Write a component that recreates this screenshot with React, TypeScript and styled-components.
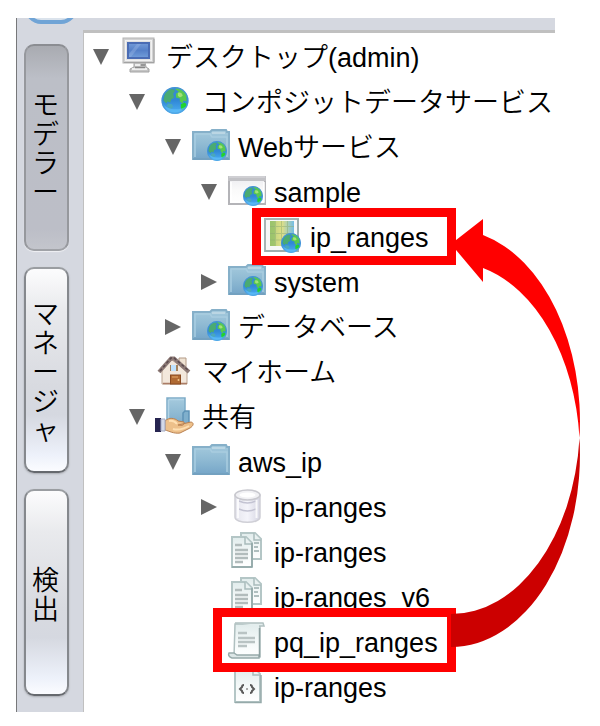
import React from "react";
import styled, { createGlobalStyle } from "styled-components";

const GlobalStyle = createGlobalStyle`
  * { box-sizing: border-box; }
  body {
    margin: 0;
    background: #fff;
    color: #000;
    font-family: "Liberation Sans", "Noto Sans CJK JP", sans-serif;
    font-size: 27px;
    font-weight: 350;
  }
`;

const Page = styled.main`
  position: relative;
  padding: 18px 45px 14px 16px;
`;

const Window = styled.div`
  display: grid;
  grid-template-columns: 66px 1fr;
  border-left: 1px solid #77787a;
  background: #d5d8e0;
`;

const Toolbar = styled.header`
  grid-column: 1 / -1;
  height: 12px;
  padding-left: 8px;
  overflow: hidden;
`;

const ToolButton = styled.button`
  display: block;
  width: 52px;
  height: 44px;
  margin-top: -38px;
  padding: 0;
  border: 4px solid #70a4d6;
  border-radius: 16px;
  background: #dbe3ec;
`;

const Rail = styled.nav`
  display: flex;
  flex-direction: column;
  gap: 16px;
  padding: 14px 14px 16px 7px;
`;

const RailTab = styled.button<{ $active?: boolean }>`
  flex: 1;
  display: flex;
  align-items: center;
  justify-content: center;
  padding: 6px 2px 0 0;
  border: 2px solid;
  border-color: ${(p) => (p.$active ? "#8b8d92 #96989d #a0a2a7" : "#9a9da1 #85888d #66696e")};
  border-radius: 10px;
  background: ${(p) =>
    p.$active
      ? "linear-gradient(#a9abb1, #bcbfc7 16%, #bcbec7 90%, #c3c5cc)"
      : "linear-gradient(#fcfcfd, #e9eaed 20%, #d8dae0 58%, #d5d8e0 72%, #edf1fa 92%, #fbfcff)"};
  box-shadow: ${(p) => (p.$active ? "0 1px 1px #f0f1f4" : "0 1px 2px #a9abb1")};
  color: #000;
  font: inherit;
  line-height: 29px;
`;

const RailLabel = styled.span`
  width: 27px;
  line-break: anywhere;
`;

const Tree = styled.ul`
  margin: 0;
  padding: 3px 0 1px;
  list-style: none;
  background: #fff;
  border-top: 3px solid #c0c0c0;
  border-left: 1px solid #c0c0c0;
`;

const Row = styled.li<{ $level: number }>`
  display: flex;
  align-items: center;
  height: 45px;
  padding-left: ${(p) => 9 + p.$level * 36}px;
  white-space: nowrap;
`;

const Toggle = styled.button`
  display: flex;
  width: 16px;
  padding: 0;
  border: 0;
  background: none;
`;

const ToggleSpace = styled.span`
  width: 16px;
`;

const IconCell = styled.svg`
  flex: none;
  width: 38px;
  height: 45px;
  margin: 0 8px 0 11px;
  overflow: visible;
`;

const Label = styled.span`
  line-height: 45px;
`;

const Frame = styled.div<{ $left: number; $top: number; $height: number }>`
  position: absolute;
  left: ${(p) => p.$left}px;
  top: ${(p) => p.$top}px;
  width: ${(p) => 456 - p.$left}px;
  height: ${(p) => p.$height}px;
  border: 9px solid #f00;
  pointer-events: none;
`;

const Arrow = styled.svg`
  position: absolute;
  left: 450px;
  top: 210px;
  pointer-events: none;
`;

const Gradients = styled.svg`
  position: absolute;
`;

function Globe({ x, y, r }: { x: number; y: number; r: number }) {
  return (
    <g transform={`translate(${x} ${y}) scale(${r / 14})`}>
      <circle r="14" fill="url(#sea)" />
      <path d="M-11 -5 C-10 -9 -6 -12 -3 -12 L0 -10 -2 -7 -1 -3 -4 -1 -5 2 -8 1 -9 3 -12 0z" fill="#4aab72" />
      <path d="M0 -12 C5 -14 11 -9 12 -5 L12 1 9 0 8 3 5 1 5 -2 1 -3 1 -7 4 -9z" fill="#58c94e" />
      <path d="M6 4 L10 2 12 4 C12 7 9 10 7 10 L6 7z" fill="#20d52c" />
      <path d="M-7 3 L-3 4 -2 7 -5 9 -9 6z" fill="#4aa8bc" />
      <path d="M3 -8 q4 -1 5 3 q-3 3 -5 0z" fill="#a4e078" />
      <path d="M-12 4 C-8 10 5 11 12 6 C9 12 4 14 0 14 C-6 14 -10 10 -12 4z" fill="#63c1fa" opacity=".6" />
      <circle r="13.2" fill="none" stroke="#4a9ada" strokeWidth="1.6" opacity=".6" />
    </g>
  );
}

function Folder() {
  return (
    <g>
      <path d="M1 6 H18 L20 4 H34 L35 6 H37 V33 H1z" fill="url(#folder)" stroke="#86b0c9" strokeWidth="2" />
      <path d="M3 8 H18 L20 11 H35 V31" fill="none" stroke="#a9cde0" strokeWidth="1.5" />
      <path d="M3 8 V31" stroke="#a9cee2" strokeWidth="1.5" />
      <path d="M20 6 H33 V8 H20z" fill="#bbd6e4" />
      <path d="M1 33 H37" stroke="#6c9dbd" strokeWidth="1.5" />
    </g>
  );
}

function Paper({ x, y, w, h }: { x: number; y: number; w: number; h: number }) {
  return (
    <g transform={`translate(${x} ${y})`}>
      <path d={`M1 1 H${w - 7} L${w - 1} 7 V${h - 1} H1z`} fill="url(#paper)" stroke="#b4c6c6" strokeWidth="2" />
      <path d={`M${w - 8} 1 V8 H${w - 1}`} fill="#e9f1f1" stroke="#a9bcbc" strokeWidth="1.5" />
    </g>
  );
}

function DocPair() {
  return (
    <g>
      <Paper x={12} y={1} w={22} h={28} />
      <path d="M26 12 h5 M26 16 h4 M26 20 h5" stroke="#b0bfbf" strokeWidth="2" />
      <Paper x={3} y={5} w={22} h={32} />
      <path d="M7 14 h7 M7 19 h13 M7 23 h13 M7 27 h13 M7 31 h8" stroke="#b2bcbc" strokeWidth="2.5" />
      <path d="M4 36 H24 M24 12 V36" stroke="#8fa5a5" strokeWidth="1.5" />
    </g>
  );
}

const icons: Record<string, React.ReactNode> = {
  desktop: (
    <g>
      <path d="M14 26 H25 L26 31 L29 33 V36 H10 V33 L14 31z" fill="#c4c4c4" stroke="#a4a4a4" />
      <path d="M15 29 H20 M12 33 H27" stroke="#eee" strokeWidth="2" />
      <path d="M21 29 H25 M15 31.500 H25" stroke="#888" strokeWidth="1.500" />
      <rect x="3" y="2" width="31" height="25" fill="#d2d2d2" stroke="#b4b4b4" />
      <path d="M4 26.500 H34 V3" fill="none" stroke="#a2a2a2" />
      <rect x="5.500" y="4.500" width="26" height="20" fill="#e2e2e2" stroke="#f2f2f2" />
      <rect x="7" y="6" width="23" height="17" fill="#4a6cb4" />
      <rect x="9" y="8" width="19" height="13" fill="url(#screen)" />
      <path d="M9 18 L17 8 H21 L11 21 H9z" fill="#a2bee9" opacity=".35" />
    </g>
  ),
  globe: <Globe x={19} y={19.5} r={13.5} />,
  folder: <Folder />,
  webFolder: (
    <g>
      <Folder />
      <Globe x={25} y={25} r={10} />
    </g>
  ),
  webWindow: (
    <g>
      <rect x="1" y="6" width="36" height="27" fill="url(#pane)" stroke="#b4b4b8" strokeWidth="2" />
      <rect x="0" y="5" width="38" height="5" fill="#c2c2c6" />
      <path d="M1 6 H37" stroke="#dcdce0" />
      <path d="M3 11 V31 H36 V11" fill="none" stroke="#fff" strokeWidth="1.5" />
      <Globe x={25} y={25} r={10} />
    </g>
  ),
  map: (
    <g>
      <rect x="1" y="3" width="33" height="32" fill="#f6f8f8" stroke="#a6b5b5" strokeWidth="2" />
      <path d="M1 35 H34 V3" fill="none" stroke="#9cabab" strokeWidth="1.5" />
      <rect x="6" y="5" width="24" height="25" fill="url(#map)" />
      <rect x="6" y="5" width="5" height="25" fill="#88ba62" opacity=".6" />
      <path d="M11.500 5 V30 M17.500 5 V30 M23.500 5 V30 M6 10.500 H30 M6 17.500 H30 M6 24 H30" stroke="#8fae74" opacity=".5" />
      <Globe x={27} y={27} r={10} />
    </g>
  ),
  home: (
    <g>
      <path d="M23 7 H30 V16 H23z" fill="#efe3d3" stroke="#b39a86" />
      <path d="M6 19 L16 9 L31 20 V33 H6z" fill="#f3e8dc" stroke="#bca592" />
      <path d="M7 32.500 H31" stroke="#ab7c66" strokeWidth="1.500" />
      <path d="M3 21 L15 7.500 H18 L33 21" fill="none" stroke="#8d7a76" strokeWidth="4" />
      <path d="M4 20 L15 7 H18 L32 19" fill="none" stroke="#5a4a4e" strokeWidth="1.500" strokeDasharray="3 2" />
      <rect x="14" y="14" width="8" height="6" fill="#a5835c" />
      <rect x="15" y="14" width="5" height="6" fill="#bfe3ff" />
      <rect x="14.500" y="24" width="10" height="9" fill="#b06a33" stroke="#8a4a20" />
      <path d="M16 26 h6" stroke="#d59558" strokeWidth="1.500" />
      <circle cx="22.500" cy="29" r="1" fill="#f1c789" />
    </g>
  ),
  share: (
    <g>
      <path d="M11 2 H29 V32 H11z" fill="url(#folder)" stroke="#7eacc8" strokeWidth="1.5" />
      <path d="M12.500 4 V24 M13 3.500 H28" stroke="#b3d4e6" strokeWidth="1.5" />
      <path d="M27 17 L29 15 H33 V30 H27z" fill="#7fafcc" stroke="#5d93b7" strokeWidth="1.5" />
      <path d="M9 25 C13 21 19 22 22 25 L28 26 C29 29 26 30 22 29 L35 26 C39 27 37 31 32 33 L24 37 C18 38 13 35 9 34z" fill="#edc08a" stroke="#b98152" />
      <path d="M13 25 q5 -1 8 3 M17 33 q7 2 16 -3" fill="none" stroke="#ffe0b3" strokeWidth="2" />
      <rect x="-1" y="22" width="6" height="14" fill="#262450" />
      <path d="M5 23 H9 V35 H5z" fill="#d4d9e8" stroke="#a2aac3" />
    </g>
  ),
  database: (
    <g>
      <path d="M7 9 V31 C7 38 32 38 32 31 V9z" fill="url(#drum)" stroke="#cfcfd6" strokeWidth="1.5" />
      <ellipse cx="19.500" cy="9" rx="12.500" ry="5" fill="#f1f1f4" stroke="#c8c8ce" strokeWidth="1.5" />
      <ellipse cx="19.500" cy="9" rx="8" ry="2.500" fill="#fff" />
      <path d="M11 15 Q19.500 19 28 15 M11 23 Q19.500 27 28 23" fill="none" stroke="#c3c3d2" strokeWidth="1.500" />
      <path d="M10 13 V32 M28.500 14 V32" stroke="#fff" strokeWidth="2" opacity=".8" />
    </g>
  ),
  docs: <DocPair />,
  script: (
    <g>
      <path d="M7 3 H32 V36 H6 L7 3z" fill="url(#paper)" stroke="#b0c0c0" strokeWidth="1.5" />
      <path d="M7 2 H35 L36 5 H31" fill="#e4eeee" stroke="#b0c0c0" strokeWidth="1.5" />
      <path d="M1 32 H6 L9 34 H31 V37 H4 C1 36 0 34 1 32z" fill="#dce6e6" stroke="#98abab" strokeWidth="1.5" />
      <path d="M31.500 7 V36" stroke="#8ca0a0" strokeWidth="1.500" />
      <path d="M10 12 h9 M10 17 h17 M10 21 h17 M10 25 h9" stroke="#b9c3c3" strokeWidth="2.500" />
    </g>
  ),
  xml: (
    <g>
      <Paper x={6} y={1} w={27} h={36} />
      <path d="M7 36.500 H33 V9" fill="none" stroke="#96aaaa" strokeWidth="1.500" />
      <path
        d="M16 19 q-2 0 -2 2 l-2 2 l2 2 q0 2 2 2 M22 19 q2 0 2 2 l2 2 l-2 2 q0 2 -2 2"
        fill="none"
        stroke="#5a5a5a"
        strokeWidth="2"
      />
      <path d="M18 23 h2" stroke="#aaa" strokeWidth="2" />
    </g>
  ),
};

type Item = { level: number; icon: string; label: string; state?: "open" | "closed" };

const items: Item[] = [
  { level: 0, icon: "desktop", label: "デスクトップ(admin)", state: "open" },
  { level: 1, icon: "globe", label: "コンポジットデータサービス", state: "open" },
  { level: 2, icon: "webFolder", label: "Webサービス", state: "open" },
  { level: 3, icon: "webWindow", label: "sample", state: "open" },
  { level: 4, icon: "map", label: "ip_ranges" },
  { level: 3, icon: "webFolder", label: "system", state: "closed" },
  { level: 2, icon: "webFolder", label: "データベース", state: "closed" },
  { level: 1, icon: "home", label: "マイホーム" },
  { level: 1, icon: "share", label: "共有", state: "open" },
  { level: 2, icon: "folder", label: "aws_ip", state: "open" },
  { level: 3, icon: "database", label: "ip-ranges", state: "closed" },
  { level: 3, icon: "docs", label: "ip-ranges" },
  { level: 3, icon: "docs", label: "ip-ranges_v6" },
  { level: 3, icon: "script", label: "pq_ip_ranges" },
  { level: 3, icon: "xml", label: "ip-ranges" },
];

const tabs = ["モデラー", "マネージャ", "検出"];

function Stops({ id, colors, across }: { id: string; colors: string[]; across?: boolean }) {
  return (
    <linearGradient id={id} x1="0" y1="0" x2={across ? "1" : "0"} y2={across ? "0" : "1"}>
      {colors.map((c, i) => (
        <stop key={i} offset={i / (colors.length - 1)} stopColor={c} />
      ))}
    </linearGradient>
  );
}

export default function App() {
  return (
    <Page>
      <GlobalStyle />
      <Gradients width="0" height="0" aria-hidden="true">
        <defs>
          <Stops id="folder" colors={["#a5cadd", "#8fbad3", "#76a6c8"]} />
          <Stops id="sea" colors={["#3a8bd0", "#3088d6", "#4fb2f5"]} />
          <Stops id="paper" colors={["#e1ecec", "#f3f8f8", "#ffffff"]} />
          <Stops id="screen" colors={["#6f97d6", "#5580c8", "#6e9ad8"]} />
          <Stops id="pane" colors={["#ececf0", "#fafafa", "#ffffff"]} />
          <Stops id="map" colors={["#b3d07a", "#dedf87", "#73bde5"]} across />
          <Stops id="drum" colors={["#e6e6ee", "#f4f4fa", "#d5d5e2"]} across />
        </defs>
      </Gradients>
      <Window>
        <Toolbar>
          <ToolButton type="button" aria-label="ツール" />
        </Toolbar>
        <Rail>
          {tabs.map((tab, i) => (
            <RailTab key={tab} type="button" $active={i === 0} aria-pressed={i === 0}>
              <RailLabel>{tab}</RailLabel>
            </RailTab>
          ))}
        </Rail>
        <Tree role="tree">
          {items.map((item, i) => (
            <Row
              key={i}
              $level={item.level}
              role="treeitem"
              aria-level={item.level + 1}
              aria-expanded={item.state ? item.state === "open" : undefined}
            >
              {item.state ? (
                <Toggle type="button" aria-label={item.label}>
                  <svg width="16" height="20" aria-hidden="true">
                    <path d={item.state === "open" ? "M0 0 H16 L8 16z" : "M0 0 L16 8 L0 16z"} fill="#666" />
                  </svg>
                </Toggle>
              ) : (
                <ToggleSpace />
              )}
              <IconCell viewBox="0 0 38 45" aria-hidden="true">
                {icons[item.icon]}
              </IconCell>
              <Label>{item.label}</Label>
            </Row>
          ))}
        </Tree>
      </Window>
      <Frame $left={252} $top={208} $height={57} />
      <Frame $left={213} $top={608} $height={64} />
      <Arrow width="131" height="440" viewBox="450 210 131 440" aria-hidden="true">
        <path
          d="M451 614 A129 192.500 0 0 0 579.500 438 A129 192.500 0 0 1 451 647z"
          fill="#c00"
        />
        <path
          d="M451 244 L483 219 V235 A129 192.500 0 0 1 579.500 438 A129 192.500 0 0 0 483 268 V282z"
          fill="#f00"
        />
      </Arrow>
    </Page>
  );
}
